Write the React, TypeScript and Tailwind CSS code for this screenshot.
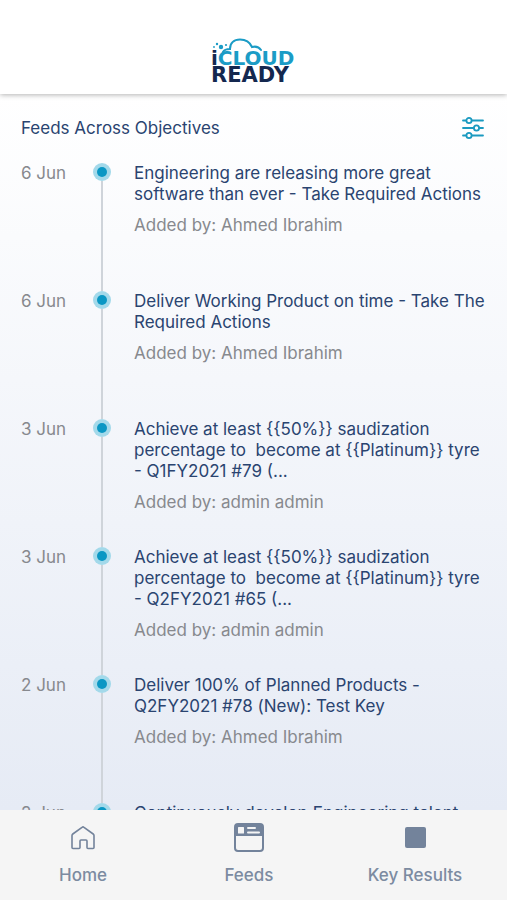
type Feed = {
  id: number;
  date: string;
  title: string;
  author: string;
};

const feeds: Feed[] = [
  {
    id: 1,
    date: "6 Jun",
    title: "Engineering are releasing more great\nsoftware than ever - Take Required Actions",
    author: "Ahmed Ibrahim",
  },
  {
    id: 2,
    date: "6 Jun",
    title: "Deliver Working Product on time - Take The\nRequired Actions",
    author: "Ahmed Ibrahim",
  },
  {
    id: 3,
    date: "3 Jun",
    title: "Achieve at least {{50%}} saudization\npercentage to  become at {{Platinum}} tyre\n- Q1FY2021 #79 (...",
    author: "admin admin",
  },
  {
    id: 4,
    date: "3 Jun",
    title: "Achieve at least {{50%}} saudization\npercentage to  become at {{Platinum}} tyre\n- Q2FY2021 #65 (...",
    author: "admin admin",
  },
  {
    id: 5,
    date: "2 Jun",
    title: "Deliver 100% of Planned Products -\nQ2FY2021 #78 (New): Test Key",
    author: "Ahmed Ibrahim",
  },
  {
    id: 6,
    date: "2 Jun",
    title: "Continuously develop Engineering talent",
    author: "Ahmed Ibrahim",
  },
];

function Logo() {
  return (
    <svg width="84" height="46" viewBox="0 0 84 46" overflow="visible" role="img" aria-label="iCloud Ready">
      <path
        d="M11 14c1-2 3-3 7-3C18 5 22 1.500 28 1.500c6 0 10 3 12 7.500 4-1 7 0 9 3"
        fill="none"
        stroke="#1b9cc6"
        strokeWidth="2"
        strokeLinecap="round"
      />
      <g fill="#1b9cc6">
        <circle cx="9" cy="9" r="2.2" />
        <circle cx="5" cy="6" r="1.2" />
        <circle cx="14" cy="7" r="1.1" />
        <circle cx="2" cy="9" r="0.9" />
      </g>
      <g fontFamily="DejaVu Sans, sans-serif" fontWeight="700" fill="#14284f">
        <text x="-1" y="27" fontSize="20">
          i<tspan fill="#1b9cc6">CLOUD</tspan>
        </text>
        <text x="-1" y="44" fontSize="21">
          READY
        </text>
      </g>
    </svg>
  );
}

function FilterIcon() {
  return (
    <svg width="22" height="22" viewBox="0 0 22 22" fill="none" stroke="#1b9ac0" strokeWidth="1.8">
      <path d="M1 3.500h3M10 3.500h11M1 11h10.500M17.500 11H21M1 18.500h3M10 18.500h11" strokeLinecap="round" />
      <circle cx="7" cy="3.5" r="2.6" />
      <circle cx="14.5" cy="11" r="2.6" />
      <circle cx="7" cy="18.5" r="2.6" />
    </svg>
  );
}

function HomeIcon() {
  return (
    <svg width="24" height="24" viewBox="0 0 24 24" fill="none" stroke="#73839b" strokeWidth="1.6" strokeLinejoin="round">
      <path d="M1 9.500a2 2 0 0 1 .8-1.500L11 1.300a1.600 1.600 0 0 1 2 0L22.200 8a2 2 0 0 1 .8 1.500V21.500a1 1 0 0 1-1 1h-5a1 1 0 0 1-1-1V15a1 1 0 0 0-1-1h-5a1 1 0 0 0-1 1v6.500a1 1 0 0 1-1 1H2a1 1 0 0 1-1-1z" />
    </svg>
  );
}

function FeedsIcon() {
  return (
    <svg width="30" height="30" viewBox="0 0 30 30" fill="none">
      <rect x="1" y="1" width="28" height="27" rx="3" stroke="#73839b" strokeWidth="2" />
      <path d="M1 3a2 2 0 0 1 2-2h24a2 2 0 0 1 2 2v10H1z" fill="#73839b" />
      <rect x="4" y="4" width="6" height="6.5" rx="0.5" fill="#f5f5f5" />
      <path d="M14 5h7M14 9.500h11" stroke="#f5f5f5" strokeWidth="2" strokeLinecap="round" />
    </svg>
  );
}

function KeyResultsIcon() {
  return (
    <svg width="21" height="21" viewBox="0 0 21 21">
      <rect width="21" height="21" rx="2" fill="#73839b" />
    </svg>
  );
}

const tabs = [
  { label: "Home", icon: <HomeIcon /> },
  { label: "Feeds", icon: <FeedsIcon /> },
  { label: "Key Results", icon: <KeyResultsIcon /> },
];

export default function App() {
  return (
    <div className="flex h-screen flex-col bg-white font-['Inter',sans-serif] text-[17px] leading-[21px]">
      <header className="z-10 flex shrink-0 justify-center bg-white pt-[38px] pb-[10px] shadow-[0_1px_5px_rgba(0,0,0,0.3)]">
        <Logo />
      </header>

      <main className="min-h-0 flex-1 overflow-hidden bg-linear-to-b from-white to-[#e6ebf5] px-[21px]">
        <div className="flex items-center justify-between pt-[23px] pr-[2px] pb-6">
          <h1 className="text-[#2a4470]">Feeds Across Objectives</h1>
          <button type="button" aria-label="Filter feeds">
            <FilterIcon />
          </button>
        </div>

        <ul>
          {feeds.map((feed) => (
            <li key={feed.id} className="flex h-32">
              <time className="w-[71px] shrink-0 text-[#87898e]">{feed.date}</time>
              <div className="flex w-5 shrink-0 flex-col items-center">
                <span className="flex size-[18px] shrink-0 items-center justify-center rounded-full bg-[#a3d9ea]">
                  <span className="size-[10px] rounded-full bg-[#0a97c4]" />
                </span>
                <span className="w-[2px] flex-1 bg-[#cfd4da]" />
              </div>
              <div className="min-w-0 flex-1 pl-[22px]">
                <h2 className="whitespace-pre text-[#2a4470]">{feed.title}</h2>
                <p className="pt-[10px] text-[#87898e]">Added by: {feed.author}</p>
              </div>
            </li>
          ))}
        </ul>
      </main>

      <nav className="z-10 grid shrink-0 grid-cols-3 bg-[#f5f5f5] pt-3 pr-[9px] pb-[14px]">
        {tabs.map((tab) => (
          <a key={tab.label} href="#" className="flex flex-col items-center gap-3 font-medium text-[#7c8ba1]">
            <span className="flex h-[31px] items-center">{tab.icon}</span>
            {tab.label}
          </a>
        ))}
      </nav>
    </div>
  );
}
